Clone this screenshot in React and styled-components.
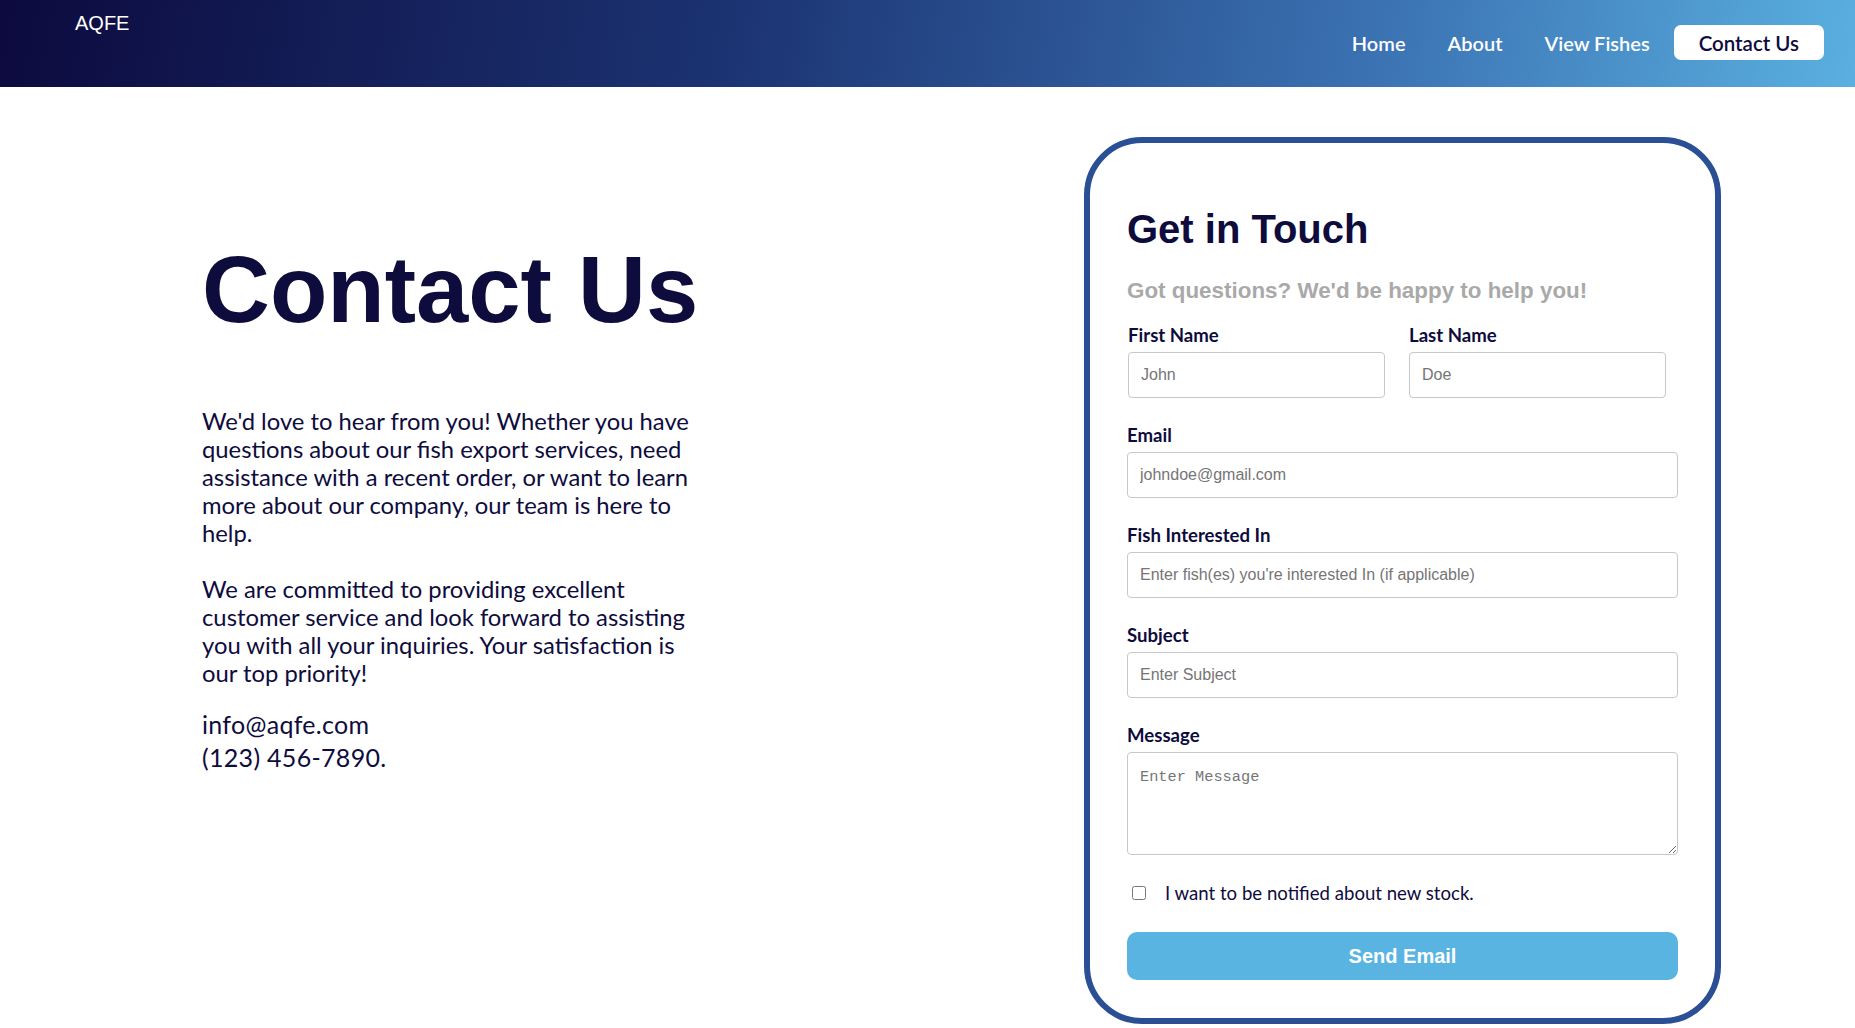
import styled, { createGlobalStyle } from "styled-components";

const GlobalStyle = createGlobalStyle`
  html, body {
    margin: 0;
    padding: 0;
    background: #ffffff;
  }
  body {
    font-family: Lato, "Noto Sans", sans-serif;
    color: #0e0c3d;
  }
  * {
    box-sizing: border-box;
  }
`;

const Header = styled.header`
  height: 87px;
  display: flex;
  justify-content: space-between;
  align-items: center;
  padding: 0 31px 0 75px;
  background: linear-gradient(100deg, #0c0a3e 0%, #1c3473 40%, #3c74b4 75%, #5ab0e0 100%);
`;

const Logo = styled.div`
  align-self: flex-start;
  padding-top: 12px;
  font-family: "Liberation Sans", Arial, sans-serif;
  font-size: 20px;
  color: #ffffff;
`;

const Nav = styled.nav`
  display: flex;
  align-items: center;
  margin-top: -2px;
`;

const NavLink = styled.a`
  display: flex;
  align-items: center;
  height: 35px;
  padding: 0 ${(p) => (p.$active ? "25px" : "21px")};
  margin-left: ${(p) => (p.$active ? "3px" : "0")};
  border-radius: 7px;
  font-size: ${(p) => (p.$active ? "20.5px" : "20px")};
  font-weight: 600;
  text-decoration: none;
  color: ${(p) => (p.$active ? "#0e0c3d" : "#ffffff")};
  background: ${(p) => (p.$active ? "#ffffff" : "transparent")};
`;

const Main = styled.main`
  display: flex;
  justify-content: space-between;
  align-items: flex-start;
  padding: 50px 134px 0 202px;
`;

const Intro = styled.section`
  width: 505px;
  padding-top: 98px;
`;

const Heading = styled.h1`
  margin: 0 0 62px 0;
  font-family: "Liberation Sans", Arial, sans-serif;
  font-size: 94px;
  font-weight: 700;
  line-height: 110px;
  color: #0e0c3d;
`;

const Paragraph = styled.p`
  margin: 0 0 28px;
  font-size: 23.8px;
  line-height: 28px;
  color: #0e0c3d;
`;

const Contacts = styled.div`
  margin-top: -7px;
`;

const ContactLine = styled.div`
  font-size: 25px;
  line-height: 33px;
  letter-spacing: 0.3px;
  color: #0e0c3d;
`;

const Card = styled.form`
  width: 637px;
  height: 887px;
  border: 6px solid #2a4f94;
  border-radius: 58px;
  padding: 63px 37px 38px;
  display: flex;
  flex-direction: column;
`;

const CardTitle = styled.h2`
  margin: 0 0 26px;
  font-family: "Liberation Sans", Arial, sans-serif;
  font-size: 40px;
  line-height: 46px;
  font-weight: 700;
  color: #0e0c3d;
`;

const CardSubtitle = styled.p`
  margin: 0 0 20px;
  font-family: "Liberation Sans", Arial, sans-serif;
  font-size: 22.4px;
  font-weight: 700;
  line-height: 26px;
  color: #a9a9a9;
`;

const NameRow = styled.div`
  display: grid;
  grid-template-columns: 257px 257px;
  column-gap: 24px;
  margin-left: 1px;
`;

const Field = styled.div`
  display: flex;
  flex-direction: column;
  margin-bottom: 26px;
`;

const Label = styled.label`
  font-size: 18.6px;
  font-weight: 700;
  line-height: 22px;
  margin-bottom: 6px;
  color: #0e0c3d;
`;

const Input = styled.input`
  height: 46px;
  width: 100%;
  padding: 0 12px;
  border: 1px solid #c8c8c8;
  border-radius: 4px;
  font-family: "Liberation Sans", Arial, sans-serif;
  font-size: 16px;
  color: #333;
  outline: none;
  &::placeholder {
    color: #757575;
  }
`;

const TextArea = styled.textarea`
  height: 103px;
  width: 100%;
  padding: 15px 12px 12px;
  border: 1px solid #c8c8c8;
  border-radius: 4px;
  font-family: "Liberation Mono", monospace;
  font-size: 15.3px;
  outline: none;
  &::placeholder {
    color: #757575;
  }
`;

const CheckRow = styled.label`
  display: flex;
  align-items: center;
  gap: 19px;
  margin: 0 0 27px 5px;
  font-size: 18.6px;
  line-height: 24px;
  color: #0e0c3d;
`;

const CheckBox = styled.input`
  width: 14px;
  height: 14px;
  margin: 0;
`;

const SendButton = styled.button`
  height: 48px;
  width: 100%;
  border: none;
  border-radius: 10px;
  background: #5ab4e2;
  color: #ffffff;
  font-family: "Liberation Sans", Arial, sans-serif;
  font-size: 20px;
  font-weight: 700;
  cursor: pointer;
`;

const App = () => {
  return (
    <>
      <GlobalStyle />
      <Header>
        <Logo>AQFE</Logo>
        <Nav>
          <NavLink href="#">Home</NavLink>
          <NavLink href="#">About</NavLink>
          <NavLink href="#">View Fishes</NavLink>
          <NavLink href="#" $active>
            Contact Us
          </NavLink>
        </Nav>
      </Header>
      <Main>
        <Intro>
          <Heading>Contact Us</Heading>
          <Paragraph>
            We'd love to hear from you! Whether you have questions about our
            fish export services, need assistance with a recent order, or want
            to learn more about our company, our team is here to help.
          </Paragraph>
          <Paragraph>
            We are committed to providing excellent customer service and look
            forward to assisting you with all your inquiries. Your satisfaction
            is our top priority!
          </Paragraph>
          <Contacts>
            <ContactLine>info@aqfe.com</ContactLine>
            <ContactLine>(123) 456-7890.</ContactLine>
          </Contacts>
        </Intro>
        <Card onSubmit={(e) => e.preventDefault()}>
          <CardTitle>Get in Touch</CardTitle>
          <CardSubtitle>Got questions? We'd be happy to help you!</CardSubtitle>
          <NameRow>
            <Field>
              <Label>First Name</Label>
              <Input placeholder="John" />
            </Field>
            <Field>
              <Label>Last Name</Label>
              <Input placeholder="Doe" />
            </Field>
          </NameRow>
          <Field>
            <Label>Email</Label>
            <Input placeholder="johndoe@gmail.com" />
          </Field>
          <Field>
            <Label>Fish Interested In</Label>
            <Input placeholder="Enter fish(es) you're interested In (if applicable)" />
          </Field>
          <Field>
            <Label>Subject</Label>
            <Input placeholder="Enter Subject" />
          </Field>
          <Field>
            <Label>Message</Label>
            <TextArea placeholder="Enter Message" />
          </Field>
          <CheckRow>
            <CheckBox type="checkbox" />
            I want to be notified about new stock.
          </CheckRow>
          <SendButton type="submit">Send Email</SendButton>
        </Card>
      </Main>
    </>
  );
};

export default App;
